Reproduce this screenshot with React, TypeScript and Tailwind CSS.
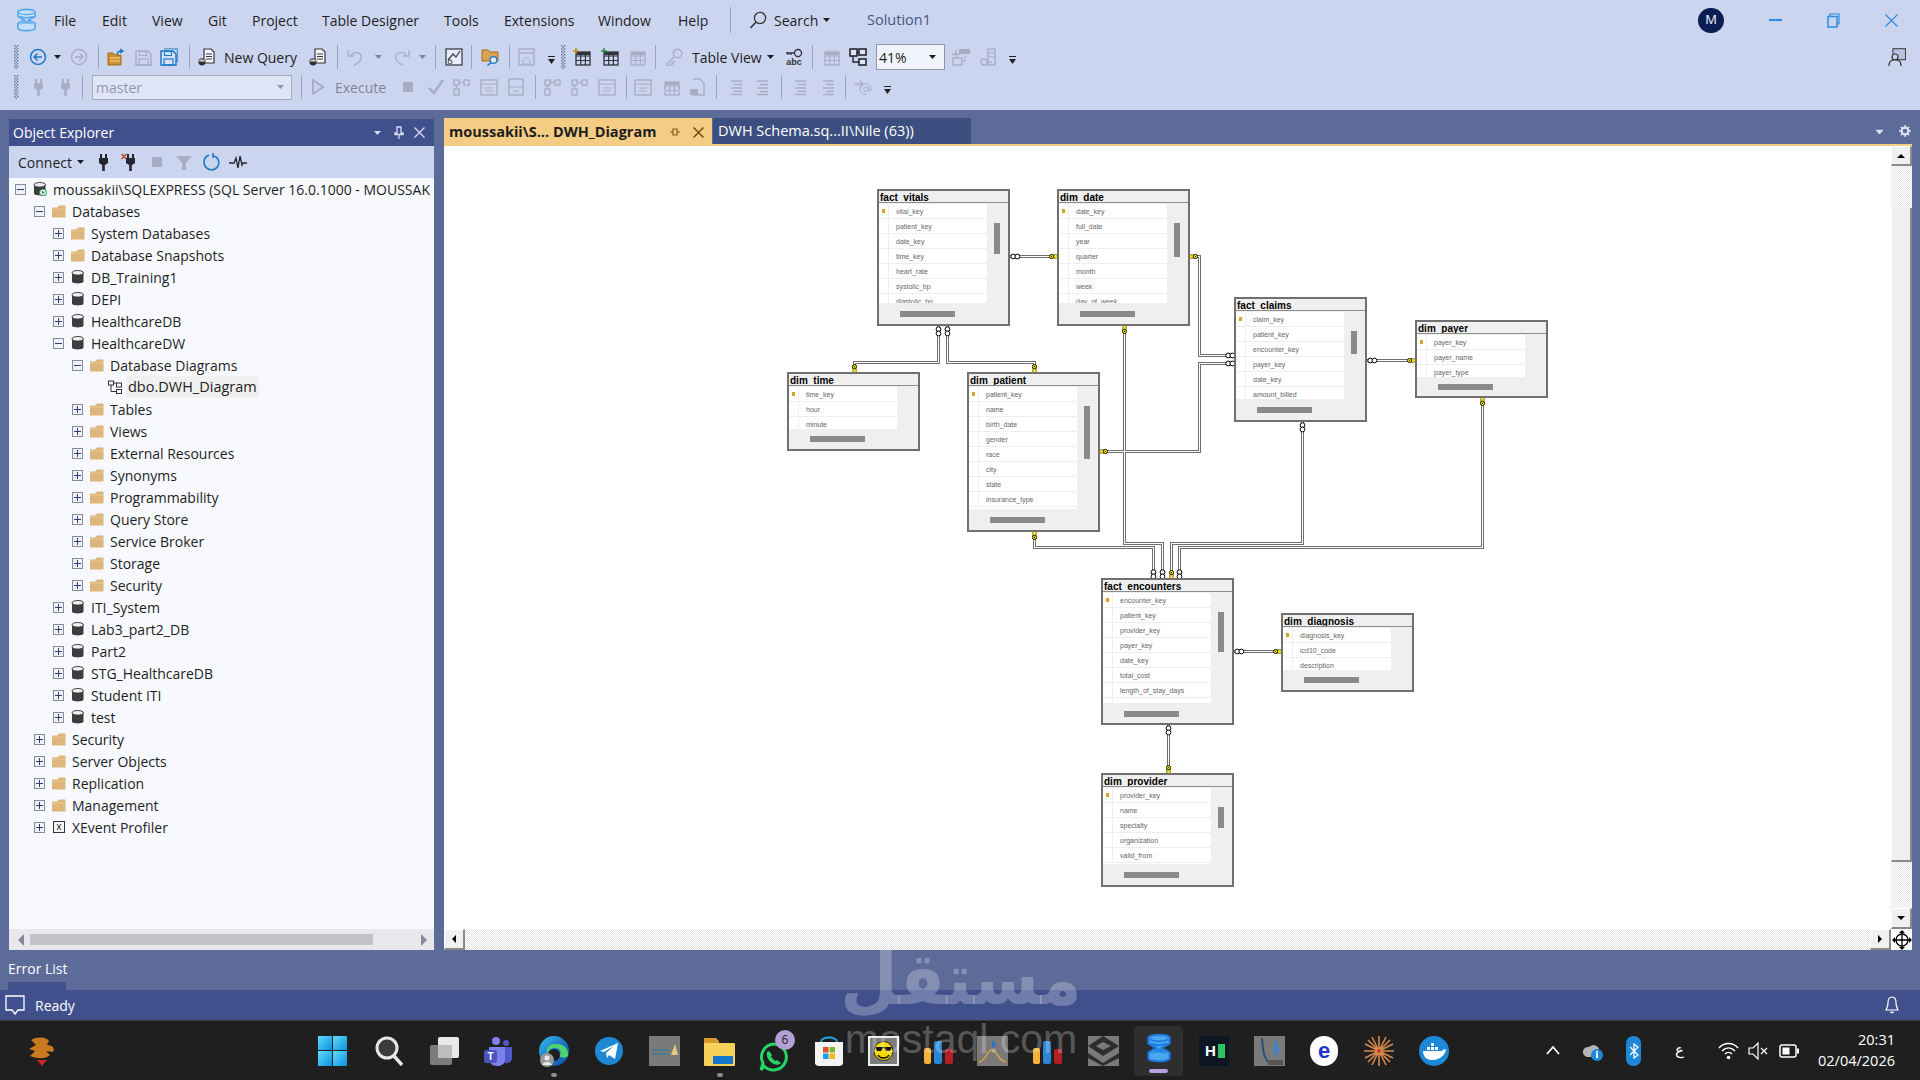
import React from "react";

const D = "#a7aec4";
const BL = "#1c78c8";

type SP = { c?: string; w?: number; h?: number; v?: string; children?: React.ReactNode };
const S = ({ c = "", w = 18, h = 18, v, children }: SP) => (
  <svg width={w} height={h} viewBox={v || `0 0 ${w} ${h}`} className={"shrink-0 " + c}>{children}</svg>
);
const Grip = ({ c = "" }: { c?: string }) => (
  <S c={c} w={5} h={24}>
    {[0, 1, 2, 3, 4, 5, 6, 7].map((i) => (
      <g key={i} fill="#6d7590"><rect x={0} y={i * 3} width={1.4} height={1.4} /><rect x={3} y={i * 3} width={1.4} height={1.4} /><rect x={1.5} y={i * 3 + 1.5} width={1.4} height={1.4} /></g>
    ))}
  </S>
);
const Sep = ({ c = "" }: { c?: string }) => <div className={"w-[1px] h-[24px] bg-[#9aa3bd] shrink-0 " + c} />;
const Caret = ({ c = "", col = "#1e1e1e" }: { c?: string; col?: string }) => (
  <S c={c} w={7} h={4}><path d="M0 0H7L3.5 4Z" fill={col} /></S>
);
const DropMore = ({ c = "" }: { c?: string }) => (
  <S c={"mt-[6px] " + c} w={7} h={9}><rect y={0} width={7} height={1} fill="#222" /><path d="M0 3H7L3.5 8Z" fill="#222" /></S>
);
const Back = ({ c = "", col = BL, d = false }: { c?: string; col?: string; d?: boolean }) => (
  <S c={c}><circle cx={9} cy={9} r={7.5} fill="none" stroke={col} strokeWidth={1.5} /><path d={d ? "M5 9H13M9.5 5.5L13 9L9.5 12.5" : "M13 9H5M8.5 5.5L5 9L8.5 12.5"} fill="none" stroke={col} strokeWidth={1.4} /></S>
);
const Doc = ({ c = "" }: { c?: string }) => (
  <S c={c}><path d="M6 1H13L16 4V15H6Z" fill="#f4f6fb" stroke="#30343f" strokeWidth={1.2} /><path d="M8 6H14M8 8.5H14M8 11H14" stroke="#30343f" strokeWidth={1} /><ellipse cx={4} cy={14} rx={3.5} ry={3.4} fill="#2e2e2e" /><ellipse cx={4} cy={12.5} rx={3.5} ry={1.5} fill="#c9c9c9" stroke="#2e2e2e" strokeWidth={0.6} /></S>
);
const Save = ({ c = "", col = D, two = false }: { c?: string; col?: string; two?: boolean }) => (
  <S c={c}>
    {two && <path d="M4 0.8H17.4V14" fill="none" stroke={col} strokeWidth={1.2} opacity={0.7} />}
    <path d="M1 3H13L16 6V17H1Z" fill={two ? "#d7e3f5" : "none"} stroke={col} strokeWidth={1.5} />
    <rect x={4.5} y={3.5} width={7} height={4} fill="none" stroke={col} strokeWidth={1.1} />
    <rect x={4} y={11} width={9} height={6} fill="none" stroke={col} strokeWidth={1.2} />
  </S>
);
const Grid = ({ c = "", col = D, mark }: { c?: string; col?: string; mark?: string }) => (
  <S c={c}>
    <rect x={3} y={4} width={14} height={13} fill="none" stroke={col} strokeWidth={1.3} />
    <path d="M3 8H17M3 12.5H17M7.7 4V17M12.4 4V17" stroke={col} strokeWidth={1.2} />
    <rect x={3} y={4} width={14} height={3} fill={col} />
    {mark && <path d="M3 0V6M0 3H6" stroke={mark} strokeWidth={1.5} />}
  </S>
);
const Lines = ({ c = "", col = D }: { c?: string; col?: string }) => (
  <S c={c}><path d="M5 3H16M8 6.5H16M5 10H16M8 13.5H16M5 16.5H16" stroke={col} strokeWidth={1.4} /></S>
);
const Frame = ({ c = "", col = D }: { c?: string; col?: string }) => (
  <S c={c}><rect x={1} y={2} width={16} height={15} fill="none" stroke={col} strokeWidth={1.4} /><path d="M1 6H17M5 10H13M5 13H13" stroke={col} strokeWidth={1.2} /></S>
);
const Nodes = ({ c = "", col = D }: { c?: string; col?: string }) => (
  <S c={c}><rect x={1} y={2} width={5} height={5} fill="none" stroke={col} strokeWidth={1.4} /><rect x={11} y={2} width={5} height={5} fill="none" stroke={col} strokeWidth={1.4} /><rect x={1} y={11} width={5} height={6} fill="none" stroke={col} strokeWidth={1.4} /><path d="M6 4.5H11M3.5 7V11" stroke={col} strokeWidth={1.4} /></S>
);
const Plug = ({ c = "", col = D, x = false }: { c?: string; col?: string; x?: boolean }) => (
  <S c={c}>
    {x && <path d="M0.5 1L5.5 6M5.5 1L0.5 6" stroke="#c2451f" strokeWidth={1.4} />}
    <path d="M7 1V5M12 1V5" stroke={col} strokeWidth={2} />
    <path d="M5 5H14V10L11 12H8L5 10Z" fill={col} />
    <rect x={8.2} y={12} width={2.6} height={6} fill={col} />
  </S>
);
const Key = ({ c = "", col = D }: { c?: string; col?: string }) => (
  <S c={c}><circle cx={12.5} cy={5.5} r={4.2} fill="none" stroke={col} strokeWidth={1.4} /><path d="M9.5 8.5L2 16V18H5L6 16H8V14L10 13" fill="none" stroke={col} strokeWidth={1.4} /></S>
);

const Logo = ({ w = 21, h = 24, c = "", a = "#54a7e8", b = "#c5e0f8" }: { w?: number; h?: number; c?: string; a?: string; b?: string }) => (
  <S c={c} w={w} h={h} v="0 0 21 24">
    <path d="M2 4V8.5L8.5 12L2 15.5V20C2 23.6 19 23.6 19 20V15.5L12.5 12L19 8.5V4C19 0.4 2 0.4 2 4Z" fill={b} stroke={a} strokeWidth={1.7} strokeLinejoin="round" />
    <path d="M3 5C7 7.2 14 7.2 18 5" fill="none" stroke={a} strokeWidth={1.4} />
    <path d="M3.5 17C7 15.3 14 15.3 17.5 17L12 12.5H9Z" fill={a} opacity={0.8} />
    <path d="M4 8.5C8 10 13 10 17 8.5" fill="none" stroke={a} strokeWidth={1.4} />
  </S>
);

const menus = [
  ["File", "w-[48px]"], ["Edit", "w-[50px]"], ["View", "w-[56px]"], ["Git", "w-[44px]"], ["Project", "w-[70px]"],
  ["Table Designer", "w-[122px]"], ["Tools", "w-[60px]"], ["Extensions", "w-[94px]"], ["Window", "w-[80px]"], ["Help", "w-[52px]"],
];

const TitleBar = () => (
  <div className="h-[42px] flex items-center pl-[16px] pb-[2px] shrink-0">
    <Logo />
    <div className="flex ml-[17px] text-[14px] text-[#1e1e1e] whitespace-nowrap">
      {menus.map(([m, w]) => <div key={m} className={w}>{m}</div>)}
    </div>
    <div className="w-[1px] h-[26px] bg-[#9aa3bd]" />
    <S c="ml-[18px]" w={18} h={18}><circle cx={11} cy={7} r={5.6} fill="none" stroke="#333" strokeWidth={1.3} /><path d="M7 11L1.5 17" stroke="#333" strokeWidth={1.6} /></S>
    <div className="ml-[7px] w-[50px] text-[14px] text-[#1e1e1e]">Search</div>
    <Caret c="ml-[-1px]" />
    <div className="ml-[37px] w-[70px] text-[14.5px] text-[#47557f] whitespace-nowrap">Solution1</div>
    <div className="ml-[761px] w-[26px] h-[25px] rounded-full bg-[#0b1d52] text-white text-[13px] flex items-center justify-center">M</div>
    <div className="ml-[45px] w-[13px] h-[1px] border-t-2 border-[#2b8ae2]" />
    <S c="ml-[45px]" w={13} h={15}><path d="M3 3V1H12V11H10" fill="none" stroke="#2b8ae2" strokeWidth={1.2} /><rect x={1} y={3.5} width={9} height={10.5} fill="none" stroke="#2b8ae2" strokeWidth={1.5} /></S>
    <S c="ml-[45px]" w={13} h={13}><path d="M0.5 0.5L12.5 12.5M12.5 0.5L0.5 12.5" stroke="#2b8ae2" strokeWidth={1.2} /></S>
  </div>
);

const Toolbar1 = () => (
  <div className="h-[30px] flex items-center pl-[14px] shrink-0">
    <Grip />
    <Back c="ml-[10px]" />
    <Caret c="ml-[7px]" />
    <Back c="ml-[9px]" col={D} d />
    <Sep c="ml-[10px]" />
    <S c="ml-[8px]"><path d="M1 5H6L8 7H14V17H1Z" fill="#d08f2e" stroke="#a86a15" /><path d="M3 10H13M3 13H13" stroke="#f1d79f" /><path d="M10 7C10 4 12 3 15 3M13 1L16 3L13 5" fill="none" stroke="#1c78c8" strokeWidth={1.5} /></S>
    <Save c="ml-[10px]" />
    <Save c="ml-[7px]" col={BL} two />
    <Sep c="ml-[11px]" />
    <Doc c="ml-[8px]" />
    <div className="ml-[8px] w-[72px] text-[14px] text-[#1e1e1e] whitespace-nowrap">New Query</div>
    <Doc c="ml-[13px]" />
    <Sep c="ml-[10px]" />
    <S c="ml-[9px]"><path d="M4 7C8 2 16 5 14 11C13 14 10 16 7 17M1 2V8H7" fill="none" stroke={D} strokeWidth={1.4} /></S>
    <Caret c="ml-[10px]" col="#7e869e" />
    <S c="ml-[10px]"><path d="M14 7C10 2 2 5 4 11C5 14 8 16 11 17M17 2V8H11" fill="none" stroke={D} strokeWidth={1.4} /></S>
    <Caret c="ml-[9px]" col="#7e869e" />
    <Sep c="ml-[9px]" />
    <S c="ml-[9px]"><rect x={1} y={1} width={16} height={16} fill="#e8edf8" stroke="#3b3f4a" strokeWidth={1.3} /><path d="M3 12L8 6L11 9L15 3" fill="none" stroke="#3b3f4a" strokeWidth={1.3} /><circle cx={5} cy={14} r={2} fill="none" stroke="#3b3f4a" /></S>
    <Sep c="ml-[8px]" />
    <S c="ml-[9px]"><path d="M1 2H7L9 4H17V13H1Z" fill="#d7a352" stroke="#a86a15" /><circle cx={12.5} cy={12} r={3.4} fill="#dbe7f7" stroke={BL} strokeWidth={1.3} /><path d="M10 14.5L6.5 17.5" stroke={BL} strokeWidth={1.5} /></S>
    <Sep c="ml-[10px]" />
    <S c="ml-[8px]"><rect x={1} y={1} width={15} height={16} fill="none" stroke={D} strokeWidth={1.4} /><path d="M1 5H16" stroke={D} strokeWidth={1.4} /><path d="M5 13L8.5 9L12 13V16H5Z" fill="none" stroke={D} /></S>
    <DropMore c="ml-[12px]" />
    <Grip c="ml-[6px]" />
    <Grid c="ml-[7px]" col="#2f333d" mark="#c48a1e" />
    <Grid c="ml-[10px]" col="#2f333d" mark="#2e8b3d" />
    <Grid c="ml-[9px]" />
    <Sep c="ml-[9px]" />
    <Key c="ml-[9px]" />
    <div className="ml-[9px] w-[70px] text-[14px] text-[#1e1e1e] whitespace-nowrap">Table View</div>
    <Caret c="ml-[5px]" />
    <S c="ml-[11px]"><circle cx={13} cy={5} r={3.5} fill="none" stroke="#2f333d" strokeWidth={1.3} /><path d="M1 5H9.5M3 5V7M6 5V7" stroke="#2f333d" strokeWidth={1.3} /><text x={9} y={17} textAnchor="middle" fontSize={9} fontWeight={700} fill="#2f333d" fontFamily="Liberation Sans">abc</text></S>
    <Sep c="ml-[9px]" />
    <Grid c="ml-[9px]" />
    <S c="ml-[9px]"><rect x={1} y={1} width={7} height={7} fill="#dfe5f4" stroke="#23262e" strokeWidth={1.6} /><rect x={10} y={1} width={7} height={6} fill="#dfe5f4" stroke="#23262e" strokeWidth={1.6} /><rect x={10} y={11} width={7} height={6} fill="#dfe5f4" stroke="#23262e" strokeWidth={1.6} /><path d="M8 4.5H10M4 8V14H10" fill="none" stroke="#23262e" strokeWidth={1.4} /></S>
    <div className="ml-[9px] w-[69px] h-[26px] border border-[#8f95a8] bg-[#f2f4fb] flex items-center pl-[2px] text-[14px] text-[#1e1e1e]">
      <span className="w-[50px]">41%</span>
      <Caret />
    </div>
    <S c="ml-[7px]"><path d="M0 6H8M4 2V10" stroke={D} strokeWidth={1.5} /><path d="M7 1H18V6H7Z" fill={D} /><rect x={1} y={10} width={9} height={7} fill="none" stroke={D} strokeWidth={1.4} /><path d="M13 8V13H10" fill="none" stroke={D} /></S>
    <S c="ml-[9px]"><rect x={9} y={1} width={7} height={16} fill="none" stroke={D} strokeWidth={1.4} /><path d="M9 5H16M9 9H16" stroke={D} /><circle cx={5} cy={14} r={3} fill="none" stroke={D} strokeWidth={1.4} /><path d="M8 14H13" stroke={D} strokeWidth={1.4} /></S>
    <DropMore c="ml-[12px]" />
    <div className="ml-[872px]">
      <S w={18} h={18}><rect x={5} y={0.7} width={12.5} height={11} fill="#b9c5e0" stroke="#444" strokeWidth={1.1} /><circle cx={7} cy={9} r={3} fill="#ccd5f0" stroke="#333" strokeWidth={1.2} /><path d="M1 18C1 13 3 12 7 12C11 12 13 13 13 18" fill="#ccd5f0" stroke="#333" strokeWidth={1.2} /></S>
    </div>
  </div>
);

const Toolbar2 = () => (
  <div className="h-[30px] flex items-center pl-[14px] shrink-0">
    <Grip />
    <Plug c="ml-[10px]" />
    <Plug c="ml-[9px]" />
    <Sep c="ml-[8px]" />
    <div className="ml-[9px] w-[200px] h-[25px] border border-[#a7abb8] bg-[#dfe5f6] flex items-center justify-between px-[3px] text-[14px] text-[#9097ab]">
      <span>master</span>
      <Caret c="mr-[4px]" col="#9097ab" />
    </div>
    <Sep c="ml-[9px]" />
    <S c="ml-[9px]" w={14} h={16}><path d="M2 1L12 8L2 15Z" fill="none" stroke={D} strokeWidth={2} /></S>
    <div className="ml-[10px] w-[51px] text-[14px] text-[#7e8497]">Execute</div>
    <div className="ml-[17px] w-[10px] h-[10px] bg-[#a7aec4]" />
    <S c="ml-[14px]"><path d="M2 10L7 15L16 2" fill="none" stroke={D} strokeWidth={2.6} /></S>
    <Nodes c="ml-[8px]" />
    <Frame c="ml-[9px]" />
    <S c="ml-[10px]" w={16} h={18}><rect x={1} y={1} width={14} height={16} fill="none" stroke={D} strokeWidth={1.4} /><path d="M1 9H15M5 13H11" stroke={D} strokeWidth={1.2} /></S>
    <Sep c="ml-[11px]" />
    <Nodes c="ml-[8px]" />
    <Nodes c="ml-[9px]" />
    <Frame c="ml-[9px]" />
    <Sep c="ml-[10px]" />
    <Frame c="ml-[7px]" />
    <Grid c="ml-[10px]" />
    <S c="ml-[9px]"><path d="M4 1H11L15 5V17H4" fill="none" stroke={D} strokeWidth={1.4} /><rect x={1} y={11} width={8} height={6} fill={D} /></S>
    <Sep c="ml-[9px]" />
    <Lines c="ml-[9px]" />
    <Lines c="ml-[8px]" />
    <Sep c="ml-[11px]" />
    <Lines c="ml-[8px]" />
    <Lines c="ml-[10px]" />
    <Sep c="ml-[9px]" />
    <S c="ml-[8px]"><path d="M1 6H9M6 3L9 6L6 9" fill="none" stroke={D} strokeWidth={1.4} /><circle cx={12} cy={11} r={2.4} fill="none" stroke={D} /><path d="M14.4 9V12C14.4 14 17 13.5 17 11C17 7 14 5.5 11.5 5.5C8 5.5 6 8 6 11C6 14 8.5 16.5 12 16.5" fill="none" stroke={D} /></S>
    <DropMore c="ml-[12px]" />
  </div>
);

const Folder = ({ c = "" }: { c?: string }) => (
  <S c={c} w={14} h={13}><path d="M0 2.5H5L7 0.5H13.5V12.5H0Z" fill="#dcb67a" /><path d="M0 4H13.5" stroke="#e7c891" /></S>
);
const Db = ({ c = "", srv = false }: { c?: string; srv?: boolean }) => (
  <S c={c} w={14} h={14}>
    <path d="M1 2.5V11.5C1 14 12.5 14 12.5 11.5V2.5Z" fill="#3d3d3d" />
    <ellipse cx={6.75} cy={2.8} rx={5.75} ry={2.3} fill="#efefef" stroke="#3d3d3d" strokeWidth={1} />
    {srv && <g><circle cx={10} cy={10.5} r={3.5} fill="#e9f3e9" stroke="#1e8c45" /><path d="M9 8.8L11.8 10.5L9 12.2Z" fill="#1e8c45" /></g>}
  </S>
);
const Exp = ({ o }: { o?: boolean }) => (
  <div className="w-[11px] h-[11px] border border-[#868b9c] bg-[#f0f2f8] relative shrink-0">
    <div className="absolute left-[1px] top-[4px] w-[7px] h-[1px] bg-[#2f3f73]" />
    {!o && <div className="absolute left-[4px] top-[1px] w-[1px] h-[7px] bg-[#2f3f73]" />}
  </div>
);

const indent = ["pl-[6px]", "pl-[25px]", "pl-[44px]", "pl-[63px]", "pl-[82px]"];
type Row = [number, string, "f" | "d" | "s" | "g" | "x", boolean?];
const rows: Row[] = [
  [0, "moussakii\\SQLEXPRESS (SQL Server 16.0.1000 - MOUSSAK", "s", true],
  [1, "Databases", "f", true],
  [2, "System Databases", "f"],
  [2, "Database Snapshots", "f"],
  [2, "DB_Training1", "d"],
  [2, "DEPI", "d"],
  [2, "HealthcareDB", "d"],
  [2, "HealthcareDW", "d", true],
  [3, "Database Diagrams", "f", true],
  [4, "dbo.DWH_Diagram", "g"],
  [3, "Tables", "f"],
  [3, "Views", "f"],
  [3, "External Resources", "f"],
  [3, "Synonyms", "f"],
  [3, "Programmability", "f"],
  [3, "Query Store", "f"],
  [3, "Service Broker", "f"],
  [3, "Storage", "f"],
  [3, "Security", "f"],
  [2, "ITI_System", "d"],
  [2, "Lab3_part2_DB", "d"],
  [2, "Part2", "d"],
  [2, "STG_HealthcareDB", "d"],
  [2, "Student ITI", "d"],
  [2, "test", "d"],
  [1, "Security", "f"],
  [1, "Server Objects", "f"],
  [1, "Replication", "f"],
  [1, "Management", "f"],
  [1, "XEvent Profiler", "x"],
];

const ObjectExplorer = () => (
  <div className="w-[425px] h-[831px] flex flex-col bg-[#f7f9fe] overflow-hidden shrink-0">
    <div className="h-[27px] bg-[#40508d] flex items-center pl-[4px] text-white text-[14px] shrink-0">
      <span className="w-[360px]">Object Explorer</span>
      <Caret c="ml-[1px]" col="#d5dcf2" />
      <S c="ml-[13px]" w={10} h={13}><path d="M3 1H7V7H9V8.5H1V7H3ZM5 8.5V13" fill="none" stroke="#d5dcf2" strokeWidth={1.3} /></S>
      <S c="ml-[10px]" w={11} h={11}><path d="M0.5 0.5L10.5 10.5M10.5 0.5L0.5 10.5" stroke="#d5dcf2" strokeWidth={1.3} /></S>
    </div>
    <div className="h-[32px] bg-[#ccd5f0] flex items-center pl-[9px] shrink-0">
      <span className="w-[50px] text-[14px] text-[#1e1e1e]">Connect</span>
      <Caret c="ml-[9px]" />
      <Plug c="ml-[10px]" col="#23262e" />
      <Plug c="ml-[9px]" col="#23262e" x />
      <div className="ml-[13px] w-[10px] h-[10px] bg-[#a7aec4]" />
      <S c="ml-[13px]"><path d="M1 3H17L11 10V17H7V10Z" fill={D} /></S>
      <S c="ml-[9px]"><path d="M7 2C2 4 1 9 3 13C6 18 13 18 16 13C18 9 16 4 12 3M11 0V5" fill="none" stroke={BL} strokeWidth={1.6} /></S>
      <S c="ml-[9px]"><path d="M0 10H5L7 5L9 15L11 3L13 12L14 10H18" fill="none" stroke="#23262e" strokeWidth={1.3} /></S>
    </div>
    <div className="flex-1 overflow-hidden">
      {rows.map(([lv, t, k, o], i) => (
        <div key={i} className={"h-[22px] flex items-center whitespace-nowrap text-[14px] text-[#1e1e1e] " + indent[lv]}>
          {k === "g" ? <div className="w-[11px] shrink-0" /> : <Exp o={o} />}
          {k === "f" && <Folder c="ml-[7px]" />}
          {(k === "d" || k === "s") && <Db c="ml-[7px]" srv={k === "s"} />}
          {k === "x" && <S c="ml-[7px]" w={14} h={14}><rect x={1.5} y={1.5} width={11} height={11} fill="#f4f4f4" stroke="#333" /><path d="M5 4L9 10M9 4L5 10" stroke="#333" /></S>}
          {k === "g" && <S c="ml-[6px]" w={14} h={14}><rect x={0.5} y={1} width={5} height={4} fill="none" stroke="#333" /><rect x={8.5} y={3} width={5} height={4} fill="none" stroke="#333" /><rect x={8.5} y={9.5} width={5} height={4} fill="none" stroke="#333" /><path d="M3 5V11.5H8.5M5.5 3H8.5" fill="none" stroke="#333" /></S>}
          {k === "g" ? <span className="ml-[4px] px-[2px] h-[22px] flex items-center bg-[#f0f0f0] text-[14.5px]">{t}</span> : <span className="ml-[6px]">{t}</span>}
        </div>
      ))}
    </div>
    <div className="h-[21px] bg-[#e8e8ec] flex items-center pl-[9px] shrink-0">
      <S w={6} h={12}><path d="M6 0V12L0 6Z" fill="#868999" /></S>
      <div className="ml-[6px] w-[343px] h-[11px] bg-[#c2c3c9]" />
      <S c="ml-[48px]" w={6} h={12}><path d="M0 0V12L6 6Z" fill="#868999" /></S>
    </div>
  </div>
);

type TP = { name: string; cols: string[]; pos: string; grid: string; thumbH?: string; hMt: string };
const tables: TP[] = [
  { name: "fact_vitals", pos: "left-[433px] top-[43px] h-[137px]", grid: "h-[99px]", thumbH: "h-[31px]", hMt: "mt-[8px]", cols: ["vital_key", "patient_key", "date_key", "time_key", "heart_rate", "systolic_bp", "diastolic_bp"] },
  { name: "dim_date", pos: "left-[613px] top-[43px] h-[137px]", grid: "h-[99px]", thumbH: "h-[34px]", hMt: "mt-[8px]", cols: ["date_key", "full_date", "year", "quarter", "month", "week", "day_of_week"] },
  { name: "dim_time", pos: "left-[343px] top-[226px] h-[79px]", grid: "h-[42px]", hMt: "mt-[7px]", cols: ["time_key", "hour", "minute"] },
  { name: "dim_patient", pos: "left-[523px] top-[226px] h-[160px]", grid: "h-[122px]", thumbH: "h-[53px]", hMt: "mt-[8px]", cols: ["patient_key", "name", "birth_date", "gender", "race", "city", "state", "insurance_type"] },
  { name: "fact_claims", pos: "left-[790px] top-[151px] h-[125px]", grid: "h-[87px]", thumbH: "h-[23px]", hMt: "mt-[8px]", cols: ["claim_key", "patient_key", "encounter_key", "payer_key", "date_key", "amount_billed"] },
  { name: "dim_payer", pos: "left-[971px] top-[174px] h-[78px]", grid: "h-[42px]", hMt: "mt-[7px]", cols: ["payer_key", "payer_name", "payer_type"] },
  { name: "fact_encounters", pos: "left-[657px] top-[432px] h-[147px]", grid: "h-[110px]", thumbH: "h-[40px]", hMt: "mt-[8px]", cols: ["encounter_key", "patient_key", "provider_key", "payer_key", "date_key", "total_cost", "length_of_stay_days", " "] },
  { name: "dim_diagnosis", pos: "left-[837px] top-[467px] h-[79px]", grid: "h-[42px]", hMt: "mt-[7px]", cols: ["diagnosis_key", "icd10_code", "description"] },
  { name: "dim_provider", pos: "left-[657px] top-[627px] h-[114px]", grid: "h-[76px]", thumbH: "h-[21px]", hMt: "mt-[8px]", cols: ["provider_key", "name", "specialty", "organization", "valid_from"] },
];

const Table = ({ t }: { t: TP }) => (
  <div className={"absolute w-[133px] border-2 border-[#707070] bg-[#efefef] flex flex-col overflow-hidden " + t.pos}>
    <div className="h-[12px] border-b border-[#8c8c8c] pl-[1px] mb-[1px] text-[10px] leading-[13px] font-bold font-['Liberation_Sans'] text-black shrink-0 overflow-hidden">{t.name}</div>
    <div className="flex items-start">
      <div className={"w-[108px] bg-white overflow-hidden shrink-0 " + t.grid}>
        {t.cols.map((c, i) => (
          <div key={c + i} className="h-[15px] flex border-b border-[#eeeeee]">
            <div className="w-[10px] border-r border-[#eeeeee] flex items-center justify-center shrink-0">
              {i === 0 && <div className="w-[3px] h-[4px] bg-[#d9a520]" />}
            </div>
            <div className="ml-[7px] text-[7px] leading-[15px] font-['Liberation_Sans'] text-[#66666a] whitespace-nowrap">{c}</div>
          </div>
        ))}
      </div>
      {t.thumbH && <div className={"ml-[7px] mt-[19px] w-[6px] bg-[#8a8a8a] shrink-0 " + t.thumbH} />}
    </div>
    <div className={"ml-[21px] w-[55px] h-[6px] bg-[#8a8a8a] shrink-0 " + t.hMt} />
  </div>
);

const links: string[] = [
  "1010,256.5 1057,256.5",
  "938.5,326 938.5,362.5 854.5,362.5 854.5,372",
  "947.5,326 947.5,362.5 1034.5,362.5 1034.5,372",
  "1190,256.5 1199.5,256.5 1199.5,355.5 1234,355.5",
  "1100,451.5 1199.5,451.5 1199.5,363.5 1234,363.5",
  "1124.5,326 1124.5,543.5 1162.5,543.5 1162.5,578",
  "1034.5,532 1034.5,547.5 1153.5,547.5 1153.5,578",
  "1302.5,422 1302.5,543.5 1171.5,543.5 1171.5,578",
  "1482.5,398 1482.5,547.5 1179.5,547.5 1179.5,578",
  "1367,360.5 1415,360.5",
  "1234,651.5 1281,651.5",
  "1168.5,725 1168.5,773",
];
const infH: [number, number][] = [[1011, 256.5], [1226, 355.5], [1226, 363.5], [1368, 360.5], [1235, 651.5]];
const infV: [number, number][] = [[938.5, 327], [947.5, 327], [1153.5, 570], [1162.5, 570], [1179.5, 570], [1302.5, 423], [1168.5, 726]];

const InfH = ({ x, y }: { x: number; y: number }) => (
  <g fill="#fff" stroke="#000" strokeWidth={1}><circle cx={x + 2.2} cy={y} r={2.4} /><circle cx={x + 6.4} cy={y} r={2.4} /></g>
);
const InfV = ({ x, y }: { x: number; y: number }) => (
  <g fill="#fff" stroke="#000" strokeWidth={1}><circle cx={x} cy={y + 2.2} r={2.4} /><circle cx={x} cy={y + 6.4} r={2.4} /></g>
);
const KeyMark = ({ x, y, r }: { x: number; y: number; r: number }) => (
  <g transform={`translate(${x} ${y}) rotate(${r})`}>
    <path d="M0 -1.7H4V1.7H0Z" fill="#ffee00" />
    <path d="M0 -1.7H4M0 1.7H4" stroke="#000" strokeWidth={0.5} />
    <ellipse cx={5.4} cy={0} rx={2.1} ry={2.1} fill="#ffee00" stroke="#000" strokeWidth={0.9} />
    <circle cx={5.4} cy={0} r={0.6} fill="#000" />
  </g>
);

const Diagram = () => (
  <svg width={1447} height={783} viewBox="444 146 1447 783" className="absolute left-0 top-0">
    {links.map((p, i) => <polyline key={i} points={p} fill="none" stroke="#6e6e6e" strokeWidth={3} shapeRendering="crispEdges" />)}
    {links.map((p, i) => <polyline key={i} points={p} fill="none" stroke="#ffffff" strokeWidth={1} shapeRendering="crispEdges" />)}
    {infH.map(([x, y], i) => <InfH key={i} x={x} y={y} />)}
    {infV.map(([x, y], i) => <InfV key={i} x={x} y={y} />)}
    <KeyMark x={1057} y={256.5} r={180} />
    <KeyMark x={1190} y={256.5} r={0} />
    <KeyMark x={1100} y={451.5} r={0} />
    <KeyMark x={1415} y={360.5} r={180} />
    <KeyMark x={1281} y={651.5} r={180} />
    <KeyMark x={854.5} y={372} r={-90} />
    <KeyMark x={1034.5} y={372} r={-90} />
    <KeyMark x={1171.5} y={578} r={-90} />
    <KeyMark x={1168.5} y={773} r={-90} />
    <KeyMark x={1124.5} y={326} r={90} />
    <KeyMark x={1034.5} y={532} r={90} />
    <KeyMark x={1482.5} y={398} r={90} />
  </svg>
);

const hatch = "bg-[repeating-conic-gradient(#e6e6e6_0_25%,#ffffff_0_50%)] bg-[length:2px_2px]";
const Btn = ({ c, d }: { c: string; d: string }) => (
  <div className={"bg-[#f0f0f0] border-r-2 border-b-2 border-[#8a8a8a] border-l border-t border-l-white border-t-white flex items-center justify-center shrink-0 " + c}>
    <S w={10} h={10}><path d={d} fill="#000" /></S>
  </div>
);

const Editor = () => (
  <div className="w-[1468px] ml-[10px] h-[840px] pt-[8px] flex flex-col shrink-0">
    <div className="h-[28px] flex items-start shrink-0 relative">
      <div className="w-[268px] h-[28px] bg-[#f5cc84] flex items-center pl-[5px] text-[14.5px] font-bold text-[#1e1e1e] shrink-0">
        <span className="w-[221px] whitespace-nowrap">moussakii\S... DWH_Diagram</span>
        <S w={10} h={10}><path d="M0 5H3M3 2V8H7V2ZM7 5H10" fill="none" stroke="#8a5a14" strokeWidth={1.2} /></S>
        <S c="ml-[13px]" w={11} h={11}><path d="M0.5 0.5L10.5 10.5M10.5 0.5L0.5 10.5" stroke="#7a4a0e" strokeWidth={1.5} /></S>
      </div>
      <div className="ml-[1px] w-[258px] h-[26px] bg-[#3d4f80] flex items-center pl-[5px] text-[14.5px] text-white whitespace-nowrap">DWH Schema.sq...II\Nile (63))</div>
      <div className="flex-1 h-[26px] flex items-center justify-end pr-[1px]">
        <Caret c="mt-[2px] scale-125" col="#dde3f5" />
        <S c="ml-[16px]" w={12} h={12}><circle cx={6} cy={6} r={3.4} fill="none" stroke="#dde3f5" strokeWidth={2.2} /><path d="M6 0V12M0 6H12M1.8 1.8L10.2 10.2M10.2 1.8L1.8 10.2" stroke="#dde3f5" strokeWidth={1.4} strokeDasharray="2 8" /></S>
      </div>
      <div className="absolute left-0 right-0 bottom-0 h-[2px] bg-[#f5cc84]" />
    </div>
    <div className="flex flex-1 min-h-0">
      <div className="w-[1447px] flex flex-col">
        <div className="h-[783px] relative bg-white overflow-hidden shrink-0">
          <Diagram />
          {tables.map((t) => <Table key={t.name} t={t} />)}
        </div>
        <div className="h-[21px] flex shrink-0">
          <Btn c="w-[21px] h-[21px]" d="M7 1V9L3 5Z" />
          <div className={"flex-1 " + hatch} />
          <Btn c="w-[21px] h-[21px]" d="M3 1V9L7 5Z" />
        </div>
      </div>
      <div className="w-[21px] flex flex-col">
        <Btn c="w-[21px] h-[20px]" d="M1 7H9L5 3Z" />
        <div className={"h-[42px] shrink-0 " + hatch} />
        <div className="h-[654px] bg-[#efefef] border-r-2 border-b-2 border-[#8a8a8a] border-l border-l-white shrink-0" />
        <div className={"h-[46px] shrink-0 " + hatch} />
        <Btn c="w-[21px] h-[21px]" d="M1 3H9L5 7Z" />
        <div className="h-[21px] bg-white flex items-center justify-center shrink-0">
          <S w={20} h={20}><circle cx={10} cy={10} r={6} fill="none" stroke="#000" strokeWidth={1.3} /><path d="M10 2V18M2 10H18" stroke="#000" strokeWidth={1.3} /><path d="M10 0L13 3H7ZM10 20L13 17H7ZM0 10L3 7V13ZM20 10L17 7V13Z" fill="#000" /></S>
        </div>
      </div>
    </div>
  </div>
);

const Thumb = ({ c, children }: { c: string; children?: React.ReactNode }) => (
  <S c={c} w={31} h={30}><rect width={31} height={30} fill="#7a7a7a" />{children}</S>
);
const Bars = ({ c }: { c: string }) => (
  <S c={c} w={31} h={30}><rect x={1} y={12} width={7} height={16} rx={2} fill="#f3b23a" /><rect x={11} y={5} width={8} height={23} rx={2} fill="#2b86d6" /><rect x={22} y={13} width={8} height={15} rx={2} fill="#b32025" /></S>
);

const Taskbar = () => (
  <div className="h-[60px] bg-[#1f1f1f] border-t border-[#3c3c3c] flex items-center shrink-0 text-white">
    <S c="ml-[27px]" w={28} h={30}><path d="M4 4C10 0 20 1 22 5L20 9C26 9 28 13 26 16L19 15L23 19C18 24 8 22 3 20L8 15L2 13L9 9Z" fill="#c9791f" /><path d="M10 24H20L15 30Z" fill="#c32a2a" /></S>
    <S c="ml-[263px]" w={29} h={30}><defs><linearGradient id="wn" x1="0" y1="0" x2="1" y2="1"><stop offset="0" stopColor="#62dcff" /><stop offset="1" stopColor="#0b90dc" /></linearGradient></defs><rect width={14} height={14} fill="url(#wn)" /><rect x={15} width={14} height={14} fill="url(#wn)" /><rect y={15} width={14} height={15} fill="url(#wn)" /><rect x={15} y={15} width={14} height={15} fill="url(#wn)" /></S>
    <S c="ml-[28px]" w={28} h={30}><circle cx={12} cy={12} r={10} fill="#3b3b3b" stroke="#e8e8e8" strokeWidth={3} /><path d="M19 20L27 29" stroke="#e8e8e8" strokeWidth={3.4} /></S>
    <S c="ml-[26px]" w={30} h={30}><rect x={9} y={1} width={21} height={21} rx={2} fill="#e8e8e8" /><rect x={1} y={9} width={22} height={20} rx={2} fill="#7c7c7c" /><rect x={9} y={9} width={14} height={13} fill="#bdbdbd" /></S>
    <S c="ml-[25px]" w={29} h={30}><circle cx={12} cy={5} r={4} fill="#7b83eb" /><circle cx={22} cy={7} r={3} fill="#5059c9" /><path d="M17 11H28V22C28 26 24 28 21 27Z" fill="#5059c9" /><path d="M5 11H21V24C21 28 17 30 13 30C9 30 5 27 5 24Z" fill="#7b83eb" /><rect x={0} y={14} width={13} height={13} rx={2} fill="#4b53bc" /><text x={6.5} y={24} textAnchor="middle" fontSize={10} fontWeight={700} fill="#fff" fontFamily="Liberation Sans">T</text></S>
    <div className="ml-[26px] w-[30px] h-[30px] relative shrink-0">
      <S w={30} h={32}><defs><linearGradient id="ed" x1="0" y1="0" x2="1" y2="1"><stop offset="0" stopColor="#35c1f1" /><stop offset="0.55" stopColor="#1b6fc2" /><stop offset="1" stopColor="#0c59a4" /></linearGradient></defs><circle cx={15} cy={15} r={15} fill="url(#ed)" /><path d="M18 8C26 8 30 14 29 20C26 22 22 22 20 20C24 16 20 11 14 12C9 13 8 17 9 20C5 13 10 7 18 8Z" fill="#4fd46f" /><circle cx={15} cy={19} r={6} fill="#1f1f1f" /><circle cx={8} cy={24} r={7} fill="#9a9a9a" /><circle cx={8} cy={22} r={2.5} fill="#e8e8e8" /><path d="M3 29C4 25 12 25 13 29Z" fill="#e8e8e8" /></S>
      <div className="absolute left-[12px] top-[37px] w-[6px] h-[4px] rounded-[2px] bg-[#8d8d8d]" />
    </div>
    <S c="ml-[26px]" w={28} h={30}><circle cx={14} cy={15} r={14} fill="#1e88d2" /><path d="M5 15L23 7L20 23L14 19L12 22L11 17L19 10L9 16Z" fill="#fff" /></S>
    <Thumb c="ml-[26px]"><path d="M3 14H20M3 18H20" stroke="#3d7f92" strokeWidth={1.5} /><path d="M22 19L26 8L29 19Z" fill="#dfcc80" /></Thumb>
    <div className="ml-[24px] w-[31px] h-[30px] relative shrink-0">
      <S w={31} h={30}><path d="M0 2H12L15 5V14H0Z" fill="#d69a2d" /><rect y={7} width={31} height={23} rx={1} fill="#f7d15a" /><rect x={9} y={20} width={20} height={8} fill="#1477c9" /></S>
      <div className="absolute left-[13px] top-[37px] w-[6px] h-[4px] rounded-[2px] bg-[#8d8d8d]" />
    </div>
    <div className="ml-[24px] w-[37px] h-[40px] relative shrink-0">
      <S c="absolute left-0 top-[11px]" w={30} h={30}><path d="M15 2A13 13 0 1 1 5 24L2 28L4 21A13 13 0 0 1 15 2Z" fill="none" stroke="#25d366" strokeWidth={3} /><path d="M10 9L13 13L12 15L16 19L18 18L22 21C18 26 6 19 8 10Z" fill="#25d366" /></S>
      <div className="absolute left-[16px] top-[-1px] w-[20px] h-[20px] rounded-full bg-[#b5a0d6] text-[#1e1e1e] text-[12px] flex items-center justify-center">6</div>
    </div>
    <S c="ml-[18px]" w={30} h={30}><path d="M7 6C7 0 23 0 23 6" fill="none" stroke="#1ea7e4" strokeWidth={2} /><path d="M1 6H29V27C29 29 27 30 25 30H5C3 30 1 29 1 27Z" fill="#f3f3f3" /><rect x={9} y={11} width={5.5} height={5.5} fill="#e2512d" /><rect x={15.5} y={11} width={5.5} height={5.5} fill="#7fb82d" /><rect x={9} y={17.5} width={5.5} height={5.5} fill="#1aa0e8" /><rect x={15.5} y={17.5} width={5.5} height={5.5} fill="#f5b91a" /></S>
    <S c="ml-[24px]" w={31} h={30}><rect x={1} y={1} width={29} height={28} fill="#7d7d7d" stroke="#eee" strokeWidth={2} /><circle cx={15.5} cy={15} r={9.5} fill="#f5d90a" stroke="#1f1f1f" /><path d="M7 11H24L22 15H18L16 12H15L13 15H9Z" fill="#111" /><path d="M10 19C12 23 19 23 21 19" fill="none" stroke="#111" strokeWidth={1.5} /></S>
    <Bars c="ml-[24px]" />
    <Thumb c="ml-[23px]"><path d="M2 26C8 26 10 14 15 14C20 14 22 26 29 26" fill="none" stroke="#d7a343" strokeWidth={1.5} /><path d="M15 4L20 9L15 12Z" fill="#2f6fc0" /></Thumb>
    <Bars c="ml-[24px]" />
    <Thumb c="ml-[25px]"><path d="M0 10L15 0L31 10L15 20Z" fill="#2e2e2e" /><path d="M8 10L15 6L23 10L15 14Z" fill="#7a7a7a" /><path d="M0 17L15 27L31 17V22L15 30L0 22Z" fill="#2e2e2e" /></Thumb>
    <div className="ml-[15px] w-[49px] h-[50px] rounded-[4px] bg-[#2e2e2e] flex flex-col items-center shrink-0">
      <Logo c="mt-[7px]" w={26} h={30} a="#1e7ae0" b="#49a8f0" />
      <div className="mt-[6px] w-[19px] h-[4px] rounded-[2px] bg-[#b9a0dd]" />
    </div>
    <div className="ml-[16px] w-[30px] h-[30px] bg-[#0d1724] flex items-center shrink-0 pl-[6px] gap-[2px] font-['Liberation_Sans'] font-bold text-[15px] leading-none">
      <span>H</span><div className="w-[7px] h-[14px] bg-[#2bc45e]" />
    </div>
    <Thumb c="ml-[25px]"><path d="M8 2C9 12 9 20 14 26" fill="none" stroke="#2a4f7c" strokeWidth={2} /><path d="M22 2L25 14L22 22L19 14Z" fill="#3f82c9" /><rect x={14} y={24} width={15} height={5} fill="#555" /></Thumb>
    <div className="ml-[25px] w-[28px] h-[30px] rounded-full bg-white flex items-center justify-center text-[#2233c8] text-[22px] font-bold font-['Liberation_Sans'] shrink-0 leading-none">e</div>
    <S c="ml-[26px]" w={30} h={30}><g stroke="#d98a4a" strokeWidth={1.6}><path d="M15 0V30M0 15H30M4 4L26 26M26 4L4 26M8 1L22 29M22 1L8 29M1 8L29 22M29 8L1 22" /></g><circle cx={15} cy={15} r={2} fill="#c93a2a" /></S>
    <S c="ml-[25px]" w={30} h={30}><circle cx={15} cy={15} r={15} fill="#1d87d8" /><path d="M4 15H23C24 13 26 13 27 14C26 18 22 24 13 24C7 24 4 20 4 15Z" fill="#fff" /><path d="M8 11H11V14H8ZM12 11H15V14H12ZM16 11H19V14H16ZM12 7H15V10H12Z" fill="#fff" /></S>
    <S c="ml-[97px]" w={14} h={9}><path d="M1 8L7 1L13 8" fill="none" stroke="#fff" strokeWidth={1.7} /></S>
    <S c="ml-[23px]" w={20} h={20}><path d="M4 16A5 5 0 0 1 6 6A6 6 0 0 1 16 8L12 16Z" fill="#b5b5b5" /><circle cx={14} cy={14} r={6} fill="#1d87d8" /><rect x={13} y={12} width={2} height={5} fill="#fff" /><rect x={13} y={10} width={2} height={1.5} fill="#fff" /></S>
    <div className="ml-[23px] w-[15px] h-[30px] rounded-[7px] bg-[#1d87d8] flex items-center justify-center shrink-0">
      <S w={10} h={16}><path d="M1 4L9 12L5 15V1L9 4L1 12" fill="none" stroke="#fff" strokeWidth={1.2} /></S>
    </div>
    <div className="ml-[34px] w-[11px] text-[15px] font-['DejaVu_Sans'] text-white leading-none">ع</div>
    <S c="ml-[32px]" w={21} h={18}><path d="M1 6C6 0 15 0 20 6M4 9C8 5 13 5 17 9M7 12C9 10 12 10 14 12" fill="none" stroke="#fff" strokeWidth={1.6} /><circle cx={10.5} cy={15.5} r={1.8} fill="#fff" /></S>
    <S c="ml-[9px]" w={20} h={18}><path d="M1 6H5L10 1V17L5 12H1Z" fill="none" stroke="#fff" strokeWidth={1.2} /><path d="M13 6L19 12M19 6L13 12" stroke="#fff" strokeWidth={1.2} /></S>
    <S c="ml-[11px]" w={20} h={14}><rect x={1} y={1} width={16} height={12} rx={2} fill="none" stroke="#fff" strokeWidth={1.5} /><rect x={3.5} y={3.5} width={7} height={7} fill="#fff" /><rect x={18} y={4.5} width={2} height={5} fill="#fff" /></S>
    <div className="ml-[16px] mb-[2px] w-[80px] text-right text-[14.5px] leading-[21px] font-['Open_Sans'] whitespace-nowrap">
      <div>20:31</div>
      <div>02/04/2026</div>
    </div>
  </div>
);

export default function App() {
  return (
    <div className="relative w-[1920px] h-[1080px] overflow-hidden bg-[#ccd5f0] flex flex-col font-['Open_Sans',sans-serif]">
      <TitleBar />
      <Toolbar1 />
      <Toolbar2 />
      <div className="h-[8px] shrink-0" />
      <div className="h-[840px] bg-[#5d6b99] flex shrink-0">
        <div className="ml-[9px] mt-[9px]"><ObjectExplorer /></div>
        <Editor />
      </div>
      <div className="h-[40px] bg-[#5d6b99] relative shrink-0 pl-[8px] text-white text-[14px]">
        <div className="pt-[9px] leading-[20px]">Error List</div>
        <div className="absolute left-[8px] bottom-0 w-[58px] h-[8px] bg-[#40508d]" />
      </div>
      <div className="h-[30px] bg-[#40508d] flex items-center pl-[5px] text-white text-[14px] shrink-0">
        <S w={20} h={20}><path d="M1 1H19V15H13L10 19L7 15H1Z" fill="none" stroke="#fff" strokeWidth={1.3} /></S>
        <span className="ml-[10px] w-[60px]">Ready</span>
        <S c="ml-[1790px]" w={14} h={18}><path d="M7 1C3.5 1 3 4 3 7C3 11 1.5 12 1 14H13C12.5 12 11 11 11 7C11 4 10.5 1 7 1ZM5.5 15.5C6 17 8 17 8.5 15.5" fill="none" stroke="#fff" strokeWidth={1.2} /></S>
      </div>
      <Taskbar />
      <div className="absolute left-[840px] top-[944px] w-[242px] pointer-events-none text-center text-white/25 whitespace-nowrap">
        <div dir="rtl" className="h-[75px] text-[66px] leading-[72px] scale-y-110 font-bold font-['DejaVu_Sans',sans-serif]">مستقل</div>
        <div className="h-[40px] text-[41px] leading-[40px] font-['Liberation_Sans',sans-serif]">mostaql.com</div>
      </div>
    </div>
  );
}
